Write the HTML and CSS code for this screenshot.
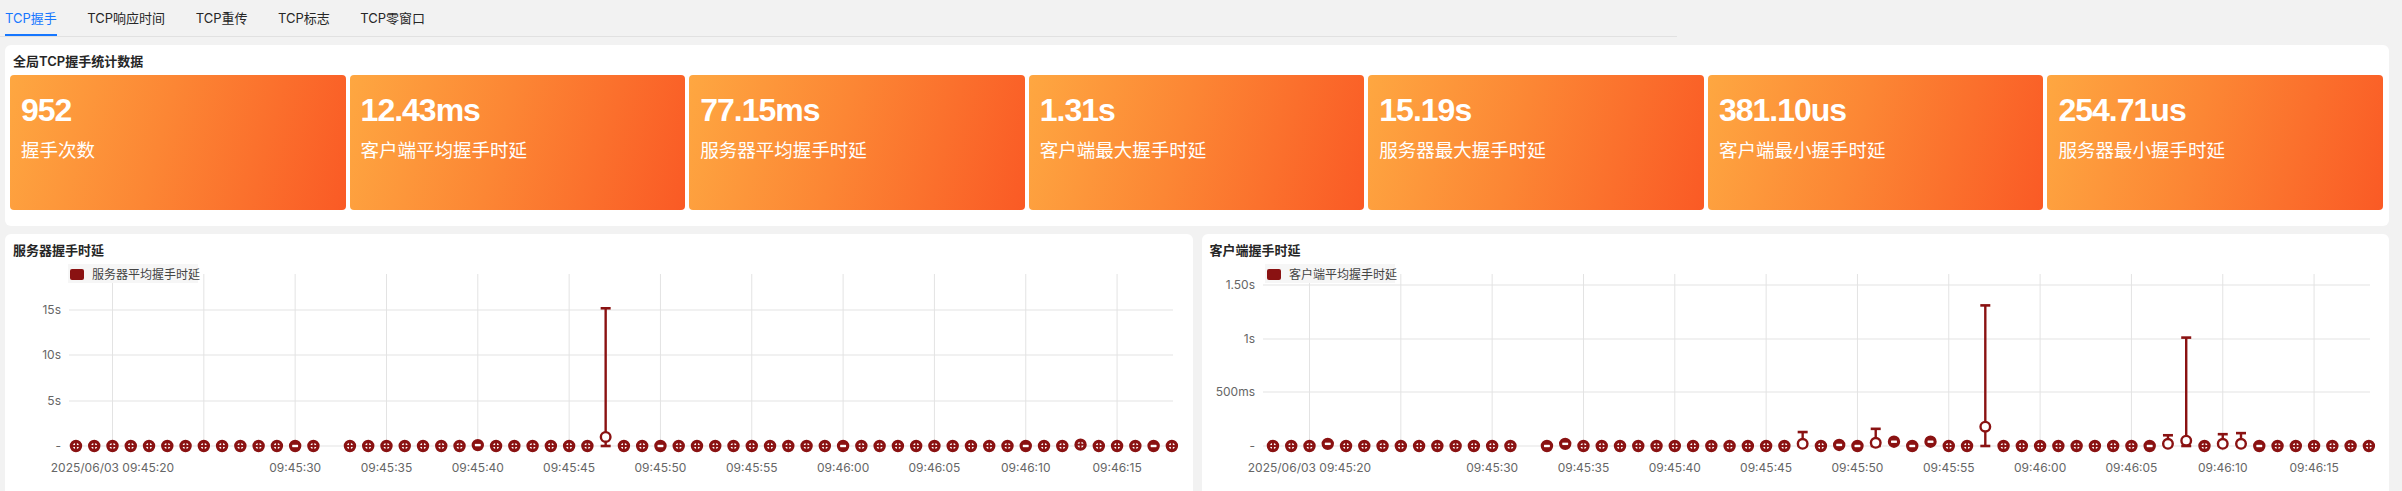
FILE: index.html
```html
<!DOCTYPE html>
<html lang="zh-CN">

<head>
	<meta charset="UTF-8">
	<title>TCP握手</title>
	<meta name="viewport" content="width=device-width, initial-scale=1.0">
	<link rel="stylesheet" href="styles.css">
</head>

<body>

	<nav class="tabs">
		<a href="#" class="tab active">TCP握手</a>
		<a href="#" class="tab">TCP响应时间</a>
		<a href="#" class="tab">TCP重传</a>
		<a href="#" class="tab">TCP标志</a>
		<a href="#" class="tab">TCP零窗口</a>
	</nav>

	<section class="stats">
		<h2 class="box-title">全局TCP握手统计数据</h2>
		<div class="stat-list">
			<div class="stat">
				<div class="stat-value">952</div>
				<div class="stat-label">握手次数</div>
			</div>
			<div class="stat">
				<div class="stat-value">12.43ms</div>
				<div class="stat-label">客户端平均握手时延</div>
			</div>
			<div class="stat">
				<div class="stat-value">77.15ms</div>
				<div class="stat-label">服务器平均握手时延</div>
			</div>
			<div class="stat">
				<div class="stat-value">1.31s</div>
				<div class="stat-label">客户端最大握手时延</div>
			</div>
			<div class="stat">
				<div class="stat-value">15.19s</div>
				<div class="stat-label">服务器最大握手时延</div>
			</div>
			<div class="stat">
				<div class="stat-value">381.10us</div>
				<div class="stat-label">客户端最小握手时延</div>
			</div>
			<div class="stat">
				<div class="stat-value">254.71us</div>
				<div class="stat-label">服务器最小握手时延</div>
			</div>
		</div>
	</section>
	<!-- /STATS -->

	<div class="charts">
		<section class="panel">
			<h2 class="box-title panel-title">服务器握手时延</h2>
			<svg id="chartServer" class="chart" width="1188" height="240"></svg>
		</section>
		<section class="panel">
			<h2 class="box-title panel-title">客户端握手时延</h2>
			<svg id="chartClient" class="chart" width="1188" height="240"></svg>
		</section>
	</div>
	<!-- /CHARTS -->

	<script src="chart.js"></script>

</body>

</html>
```

FILE: styles.css
```css
/*Reset*/

* {
	margin: 0;
	padding: 0;
	box-sizing: border-box;
}

body {
	font-family: Inter, "Noto Sans CJK SC", sans-serif;
	font-size: 13px;
	color: #262626;
	background-color: #f2f2f2;
	padding: 0 13px 0 5px;
	height: 491px;
	overflow: hidden;
}

/*Onglets*/
.tabs {
	display: flex;
	gap: 30.5px;
	width: 1677px;
	margin-left: -5px;
	padding-left: 5px;
	border-bottom: 1px solid #e1e1e1;
}

.tab {
	text-decoration: none;
	color: #262626;
	line-height: 16px;
	padding: 10px 0 8px;
	border-bottom: 2px solid transparent;
}

.tab.active {
	color: #1677ff;
	border-bottom-color: #1677ff;
}

.box-title {
	font-size: 13px;
	font-weight: 600;
	line-height: 16px;
}

/*Statistiques globales*/
.stats {
	margin-top: 8px;
	background-color: #fff;
	border-radius: 6px;
	padding: 8px 6px 16px 5px;
}

.stats .box-title {
	margin: 0 0 6px 3px;
}

.stat-list {
	display: flex;
	gap: 4px;
}

.stat {
	flex: 1;
	height: 135px;
	border-radius: 4px;
	padding: 15px 11px 0;
	color: #fff;
	background: linear-gradient(105deg, #fea741 0%, #fc8634 45%, #fa5a25 100%);
}

.stat-value {
	font-family: "Liberation Sans", Arial, sans-serif;
	font-weight: 700;
	font-size: 32px;
	line-height: 40px;
	letter-spacing: -1px;
}

.stat-label {
	font-family: "Noto Sans CJK SC", sans-serif;
	font-size: 18.5px;
	line-height: 26px;
	margin-top: 6px;
}

/*Graphiques*/
.charts {
	display: flex;
	gap: 9px;
	margin-top: 8px;
}

.panel {
	flex: 1;
	height: 280px;
	background-color: #fff;
	border-radius: 6px;
	overflow: hidden;
}

.panel-title {
	padding: 8px 0 0 8px;
}

.chart {
	display: block;
}

.chart .axis {
	font-family: Inter, sans-serif;
	font-size: 12px;
	fill: #666;
}

.chart .legend {
	font-family: "Noto Sans CJK SC", sans-serif;
	font-size: 12px;
	fill: #444;
}
```

FILE: chart.js
```javascript
/*
	Graphiques : barres d'erreur min / moyenne / max par seconde
*/
(function () {
	var RED = '#8a1212';
	var GRID = '#e3e3e3';
	var STEP = 18.265;   // px par seconde
	var X0 = 107.5;      // position de 09:45:20
	var BASE = 188;      // ligne du zéro
	var RIGHT = 1168;
	var NS = 'http://www.w3.org/2000/svg';

	var xLabels = {
		0: '2025/06/03 09:45:20', 10: '09:45:30', 15: '09:45:35', 20: '09:45:40',
		25: '09:45:45', 30: '09:45:50', 35: '09:45:55', 40: '09:46:00',
		45: '09:46:05', 50: '09:46:10', 55: '09:46:15'
	};

	function el(parent, name, attrs, text) {
		var n = document.createElementNS(NS, name);
		for (var k in attrs) n.setAttribute(k, attrs[k]);
		if (text) n.textContent = text;
		parent.appendChild(n);
		return n;
	}

	function line(g, x1, y1, x2, y2, w, color) {
		return el(g, 'line', { x1: x1, y1: y1, x2: x2, y2: y2, stroke: color || RED, 'stroke-width': w });
	}

	function drawPoint(g, x, p, scale) {
		if (p.kind === 'bar') {
			var yMax = BASE - p.max * scale;
			var yAvg = BASE - p.avg * scale;
			line(g, x, BASE, x, yMax, 2.4);
			line(g, x - 5, yMax, x + 5, yMax, 2.6);
			line(g, x - 5, BASE, x + 5, BASE, 2.6);
			el(g, 'circle', { cx: x, cy: yAvg, r: 4.8, fill: '#fff', stroke: RED, 'stroke-width': 2.4 });
			return;
		}
		var y = BASE - (p.avg || 0) * scale;
		el(g, 'circle', { cx: x, cy: y, r: 4.6, fill: '#fff', stroke: RED, 'stroke-width': 3.2 });
		if (p.kind === 'minus') {
			line(g, x - 4, y - 2.5, x + 4, y - 2.5, 2.6);
			line(g, x - 4, y + 2.5, x + 4, y + 2.5, 2.6);
		} else {
			line(g, x - 4.5, y, x + 4.5, y, 1.9);
			line(g, x, y - 4.5, x, y + 4.5, 1.9);
		}
	}

	function drawChart(cfg) {
		var svg = document.getElementById(cfg.id);
		var s, x;

		for (s = 0; s <= 55; s += 5) {
			x = X0 + s * STEP;
			line(svg, x, 16, x, 193, 1, GRID);
			if (xLabels[s]) {
				el(svg, 'text', { x: x, y: 213.5, 'text-anchor': 'middle', 'class': 'axis' }, xLabels[s]);
			}
		}

		cfg.ticks.forEach(function (t) {
			line(svg, cfg.left, t[0], RIGHT, t[0], 1, GRID);
			el(svg, 'text', { x: cfg.left - 8, y: t[0] + 4.3, 'text-anchor': 'end', 'class': 'axis' }, t[1]);
		});

		// légende
		el(svg, 'rect', { x: 63, y: 6, width: 130, height: 19, fill: '#f6f6f6' });
		el(svg, 'rect', { x: 65, y: 11, width: 14, height: 11, rx: 2, fill: RED });
		el(svg, 'text', { x: 87, y: 21, 'class': 'legend' }, cfg.legend);

		// points de 09:45:18 à 09:46:18 (09:45:32 absent)
		for (s = -2; s <= 58; s++) {
			if (s === 12) continue;
			drawPoint(svg, X0 + s * STEP, cfg.marks[s] || { kind: 'plus' }, cfg.scale);
		}
	}

	drawChart({
		id: 'chartServer',
		left: 64,
		scale: 9.067,
		legend: '服务器平均握手时延',
		ticks: [[52, '15s'], [97, '10s'], [143, '5s'], [188, '-']],
		marks: {
			10: { kind: 'minus' },
			20: { kind: 'minus', avg: 0.1 },
			27: { kind: 'bar', avg: 1.0, max: 15.19 },
			30: { kind: 'minus' },
			40: { kind: 'minus' },
			50: { kind: 'minus' },
			53: { kind: 'plus', avg: 0.15 },
			57: { kind: 'minus' }
		}
	});

	drawChart({
		id: 'chartClient',
		left: 61,
		scale: 107.33,
		legend: '客户端平均握手时延',
		ticks: [[27, '1.50s'], [81, '1s'], [134, '500ms'], [188, '-']],
		marks: {
			1: { kind: 'minus', avg: 0.02 },
			13: { kind: 'minus' },
			14: { kind: 'minus', avg: 0.02 },
			27: { kind: 'bar', avg: 0.02, max: 0.13 },
			29: { kind: 'minus', avg: 0.01 },
			30: { kind: 'minus' },
			31: { kind: 'bar', avg: 0.03, max: 0.16 },
			32: { kind: 'minus', avg: 0.04 },
			33: { kind: 'minus' },
			34: { kind: 'minus', avg: 0.04 },
			37: { kind: 'bar', avg: 0.18, max: 1.31 },
			46: { kind: 'minus' },
			47: { kind: 'bar', avg: 0.02, max: 0.10 },
			48: { kind: 'bar', avg: 0.05, max: 1.01 },
			50: { kind: 'bar', avg: 0.02, max: 0.11 },
			51: { kind: 'bar', avg: 0.02, max: 0.12 },
			52: { kind: 'minus' }
		}
	});
})();
```
